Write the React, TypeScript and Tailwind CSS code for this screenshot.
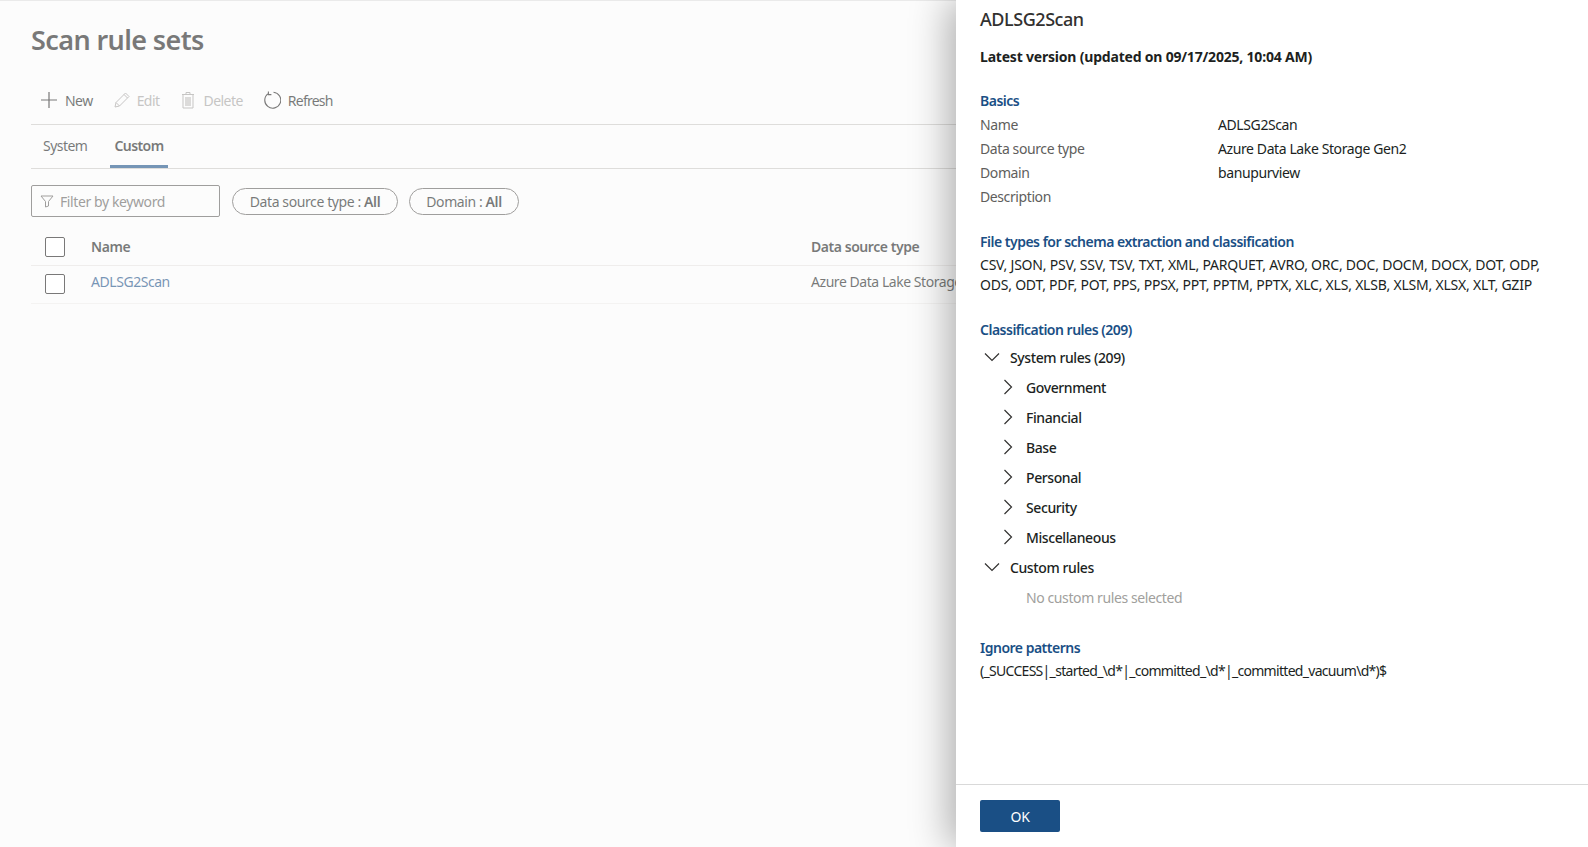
import React from 'react';

const font = "[font-family:'Noto_Sans','Open_Sans',sans-serif]";

const basics = [
  ['Name', 'ADLSG2Scan'],
  ['Data source type', 'Azure Data Lake Storage Gen2'],
  ['Domain', 'banupurview'],
  ['Description', ''],
];

const systemRules = ['Government', 'Financial', 'Base', 'Personal', 'Security', 'Miscellaneous'];

const SectionTitle = ({ children }: { children: React.ReactNode }) => (
  <div className="h-6 leading-6 font-semibold text-[#1a4f85] tracking-[-0.5px]">{children}</div>
);

const Checkbox = () => <div className="w-5 h-5 rounded-[2px] border border-[#201f1e] bg-white" />;

const ChevronDownIcon = () => (
  <svg width="16" height="16" viewBox="0 0 16 16" fill="none" stroke="#323130" strokeWidth="1.2" className="mr-[10px]">
    <path d="M1 4.5l7 7 7-7" />
  </svg>
);

const ChevronRightIcon = () => (
  <svg width="16" height="16" viewBox="0 0 16 16" fill="none" stroke="#323130" strokeWidth="1.2" className="mr-[10px]">
    <path d="M4.5 1l7 7-7 7" />
  </svg>
);

const Toolbar = () => (
  <div className="flex items-center h-8 pl-[9px] -mt-px text-[14px] tracking-[-0.55px] text-[#201f1e]">
    <button className="flex items-center gap-[7px] mr-5">
      <svg width="18" height="18" viewBox="0 0 18 18" fill="none" stroke="currentColor" strokeWidth="1.2">
        <path d="M9 1v16M1 9h16" />
      </svg>
      New
    </button>
    <button className="flex items-center gap-[6px] mr-[21px] text-[#a19f9d]">
      <svg width="18" height="18" viewBox="0 0 18 18" fill="none" stroke="currentColor" strokeWidth="1">
        <path d="M2 16l1-4.5L12.5 2l3.5 3.5L6.5 15 2 16zM3 11.5L6.5 15M11 3.5L14.5 7" />
      </svg>
      Edit
    </button>
    <button className="flex items-center gap-[9px] mr-5 text-[#a19f9d]">
      <svg width="14" height="18" viewBox="0 0 14 18" fill="none" stroke="currentColor" strokeWidth="1">
        <path d="M1 3.5h12M5 3.5V1.5h4v2M2 3.5V17h10V3.5" />
        <rect x="4" y="6" width="6" height="9" fill="currentColor" stroke="none" opacity="0.6" />
      </svg>
      Delete
    </button>
    <button className="flex items-center gap-[7px] tracking-[-0.75px]">
      <svg width="18" height="18" viewBox="0 0 18 18" fill="none" stroke="currentColor" strokeWidth="1.1">
        <path d="M5.2 2.6A8 8 0 1 0 10.5 1.2M5.4 0.6v3h3" />
      </svg>
      Refresh
    </button>
  </div>
);

const ScanRuleSets = () => (
  <div className="h-screen bg-[#fafafa] border-t border-[#dcdcdc] px-[31px] overflow-hidden">
    <h1 className="h-[80px] pt-[17px] text-[27px] leading-[44px] font-semibold tracking-[-0.6px] text-[#201f1e]">
      Scan rule sets
    </h1>
    <div className="pt-[4px] h-[44px] border-b border-[#c8c6c4]">
      <Toolbar />
    </div>
    <div className="flex h-[44px] border-b border-[#c8c6c4] text-[14px] tracking-[-0.55px] text-[#201f1e]">
      <div className="w-[79px] pl-3 pt-[10px]">System</div>
      <div className="w-[58px] relative text-center pt-[10px] font-semibold">
        Custom
        <div className="absolute left-0 right-0 bottom-0 h-[3px] bg-[#1a4f85]" />
      </div>
    </div>
    <div className="flex items-center gap-[11px] mt-4 h-8 text-[14px] tracking-[-0.4px]">
      <div className="flex items-center gap-[6px] w-[189px] h-8 px-2 mr-[1px] border border-[#605e5c] rounded-[2px] text-[#605e5c]">
        <svg width="14" height="14" viewBox="0 0 14 14" fill="none" stroke="currentColor" strokeWidth="1">
          <path d="M1 2h12L8.5 7.5V12L5.5 13V7.5L1 2z" />
        </svg>
        Filter by keyword
      </div>
      <div className="h-[27px] w-[166px] text-center leading-[25px] rounded-full border border-[#605e5c] text-[#201f1e]">
        Data source type : <span className="font-semibold">All</span>
      </div>
      <div className="h-[27px] w-[110px] text-center leading-[25px] rounded-full border border-[#605e5c] text-[#201f1e]">
        Domain : <span className="font-semibold">All</span>
      </div>
    </div>
    <div className="text-[14px] tracking-[-0.45px]">
      <div className="flex items-center h-[38px] mt-[11px] border-b border-[#e4e2e0] font-semibold text-[#201f1e]">
        <div className="w-[60px] pl-[14px]">
          <Checkbox />
        </div>
        <div className="w-[720px]">Name</div>
        <div>Data source type</div>
      </div>
      <div className="flex items-center h-[38px] border-b border-[#edebe9] text-[#201f1e]">
        <div className="w-[60px] pl-[14px] pb-[2px]">
          <Checkbox />
        </div>
        <div className="w-[720px] pb-[6px] text-[#1a4f85]">ADLSG2Scan</div>
        <div className="pb-[6px] whitespace-nowrap">Azure Data Lake Storage Gen2</div>
      </div>
    </div>
  </div>
);

const Details = () => (
  <div className="absolute top-0 right-0 bottom-0 w-[632px] bg-white flex flex-col shadow-[-8px_0_36px_rgba(0,0,0,0.3)] text-[14px] tracking-[-0.4px] text-[#201f1e]">
    <div className="flex-1 px-6 pt-[5px] overflow-hidden">
      <h2 className="text-[18px] leading-7 font-medium tracking-[-0.45px] text-[#323130]">ADLSG2Scan</h2>
      <div className="mt-[12px] h-[24px] leading-6 font-bold tracking-[-0.2px]">
        Latest version (updated on 09/17/2025, 10:04 AM)
      </div>
      <div className="mt-[20px]">
        <SectionTitle>Basics</SectionTitle>
        {basics.map(([k, v]) => (
          <div key={k} className="flex h-6 leading-6">
            <div className="w-[238px] text-[#605e5c]">{k}</div>
            <div>{v}</div>
          </div>
        ))}
      </div>
      <div className="mt-[21px]">
        <SectionTitle>File types for schema extraction and classification</SectionTitle>
        <p className="mt-[1px] w-[580px] leading-5 tracking-[-0.22px]">
          CSV, JSON, PSV, SSV, TSV, TXT, XML, PARQUET, AVRO, ORC, DOC, DOCM, DOCX, DOT, ODP, ODS, ODT, PDF, POT, PPS,
          PPSX, PPT, PPTM, PPTX, XLC, XLS, XLSB, XLSM, XLSX, XLT, GZIP
        </p>
      </div>
      <div className="mt-[23px]">
        <SectionTitle>Classification rules (209)</SectionTitle>
        <div>
          <div className="flex items-center h-[30px] font-medium pl-1">
            <ChevronDownIcon />
            System rules (209)
          </div>
          {systemRules.map((r) => (
            <div key={r} className="flex items-center h-[30px] pl-5 font-medium">
              <ChevronRightIcon />
              {r}
            </div>
          ))}
          <div className="flex items-center h-[30px] font-medium pl-1">
            <ChevronDownIcon />
            Custom rules
          </div>
          <div className="flex items-center h-[30px] pl-[46px] text-[#a19f9d]">No custom rules selected</div>
        </div>
      </div>
      <div className="mt-[24px]">
        <SectionTitle>Ignore patterns</SectionTitle>
        <div className="h-6 -mt-px leading-6 tracking-[-0.7px]">
          (_SUCCESS|_started_\d*|_committed_\d*|_committed_vacuum\d*)$
        </div>
      </div>
    </div>
    <div className="h-[63px] border-t border-[#d9d9d9] px-6 pt-[15px]">
      <button className="w-20 h-8 rounded-[2px] bg-[#1a4f85] text-white">OK</button>
    </div>
  </div>
);

export default function App() {
  return (
    <div className={`relative h-screen overflow-hidden ${font}`}>
      <ScanRuleSets />
      <div className="absolute inset-0 bg-white/40" />
      <Details />
    </div>
  );
}
